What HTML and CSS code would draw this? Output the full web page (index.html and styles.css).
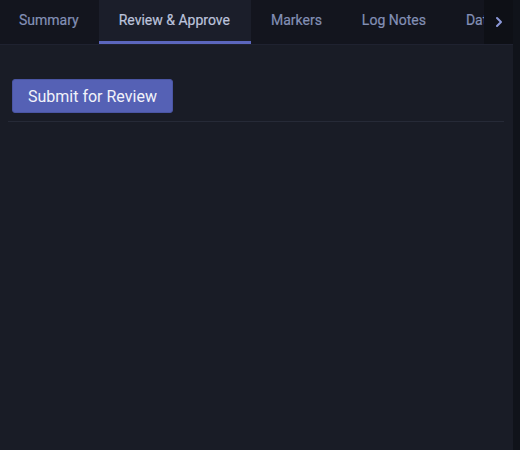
FILE: index.html
```html
<!DOCTYPE html>
<html>
<head>
<meta charset="utf-8">
<link rel="stylesheet" href="styles.css">
</head>
<body>
<div class="app">
  <div class="main">
    <div class="tabbar">
      <div class="tabs">
        <div class="tab first">Summary</div>
        <div class="tab active">Review &amp; Approve</div>
        <div class="tab">Markers</div>
        <div class="tab">Log Notes</div>
        <div class="tab">Data</div>
      </div>
      <div class="arrow">
        <svg width="10" height="12" viewBox="0 0 10 12"><path d="M3 2 L7 6 L3 10" fill="none" stroke="#8c98d8" stroke-width="2" stroke-linecap="round" stroke-linejoin="round"/></svg>
      </div>
    </div>
    <div class="content">
      <button class="submit">Submit for Review</button>
      <div class="sep"></div>
    </div>
  </div>
  <div class="track"></div>
</div>
</body>
</html>
```
FILE: styles.css
```css
html, body { margin: 0; padding: 0; height: 100%; }
body { background: #191c26; font-family: Roboto, "Liberation Sans", sans-serif; }
.app { display: flex; height: 450px; width: 520px; overflow: hidden; }
.main { flex: 1; display: flex; flex-direction: column; min-width: 0; }
.track { width: 7px; background: #10131a; }
.tabbar { position: relative; height: 44px; background: #13151e; border-bottom: 1px solid #1f2230; display: flex; overflow: hidden; }
.tabs { display: flex; white-space: nowrap; }
.tab { padding: 0 20px; height: 44px; font-size: 14px; color: #8390b6; box-sizing: border-box; border-bottom: 3px solid transparent; line-height: 41px; -webkit-text-stroke: 0.2px currentColor; }
.tab.first { padding-left: 19px; }
.tab.active { padding-right: 21px; background: #1b1e2a; color: #bcc3dc; border-bottom-color: #5b66bd; }
.arrow { position: absolute; right: 0; top: 0; width: 29px; height: 44px; background: #0e1016; display: flex; align-items: center; justify-content: center; }
.content { padding: 34px 9px 0 8px; }
.submit { margin-left: 4px; height: 34px; padding: 0 15px; background: #5561b5; color: #f2f3fa; border: 1px solid #4a55a3; border-radius: 3px; font-family: Roboto, "Liberation Sans", sans-serif; font-size: 16px; cursor: pointer; }
.sep { margin-top: 8px; height: 1px; background: #262a37; }
```
